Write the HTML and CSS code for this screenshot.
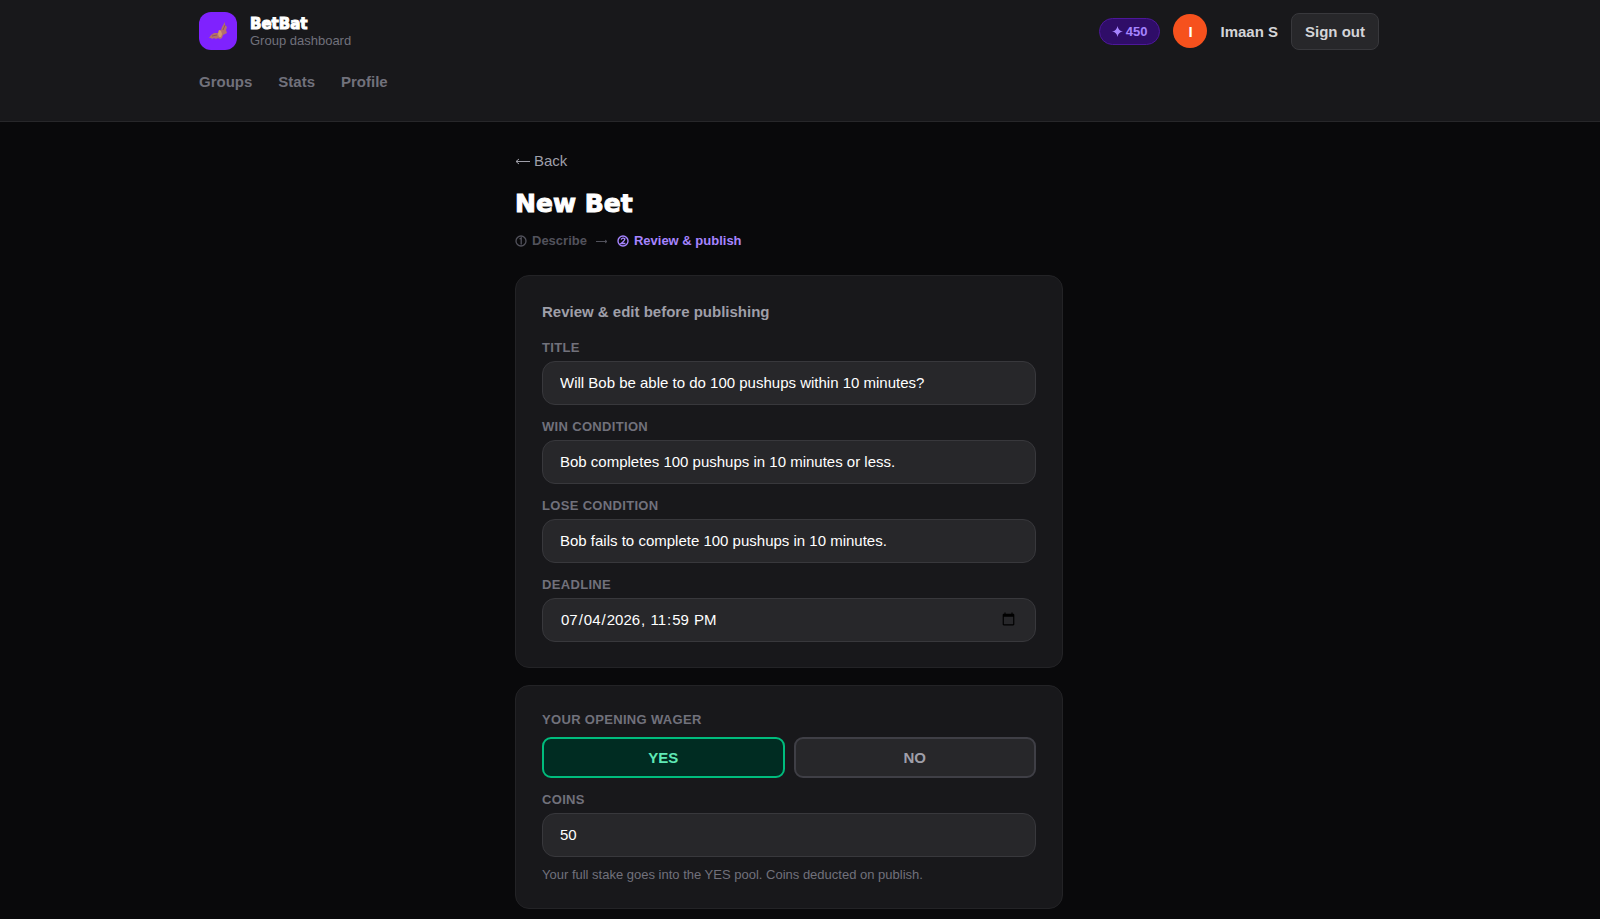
FILE: index.html
```html
<!DOCTYPE html>
<html lang="en">
<head>
    <meta charset="UTF-8">
    <meta name="viewport" content="width=device-width, initial-scale=1.0">
    <title>BetBat - New Bet</title>
    <link rel="stylesheet" href="styles.css">
</head>
<body>
    <header class="header">
        <div class="header-inner">
            <div class="topbar">
                <a class="brand" href="#">
                    <span class="logo">
                        <svg width="20" height="20" viewBox="0 0 20 20">
                            <path d="M1 17 L3 14 L6 12 L10 12 L11 9 L13 9 L14 6 L17 1 L17 4 L19 6 L18 9 L19 12 L17 13 L15 14 L14 17 L12 18 L10 17 L8 18 L6 17 L4 18 L3 17 Z" fill="#b5706a"/>
                            <path d="M11 9 L13 10 L14 13 L13 16 L11 16 L10 13 Z" fill="#d39a6c"/>
                            <path d="M17 4 L15 9 M4 15 L9 14" stroke="#8f5560" stroke-width="1" fill="none"/>
                        </svg>
                    </span>
                    <span class="brand-text">
                        <span class="brand-name">BetBat</span>
                        <span class="brand-sub">Group dashboard</span>
                    </span>
                </a>
                <div class="account">
                    <span class="coins-badge">
                        <svg width="11" height="11" viewBox="0 0 12 12"><path d="M6 0 Q6.8 5.2 12 6 Q6.8 6.8 6 12 Q5.2 6.8 0 6 Q5.2 5.2 6 0Z" fill="currentColor"/></svg>
                        450
                    </span>
                    <span class="avatar">I</span>
                    <span class="user-name">Imaan S</span>
                    <button class="sign-out" type="button">Sign out</button>
                </div>
            </div>
            <nav class="nav">
                <a href="#">Groups</a>
                <a href="#">Stats</a>
                <a href="#">Profile</a>
            </nav>
        </div>
    </header>

    <main class="main">
        <a class="back" href="#">
            <svg width="15" height="8" viewBox="0 0 15 8"><path d="M15 4.5H1M4 2L1 4.5L4 7" fill="none" stroke="currentColor"/></svg>
            Back
        </a>
        <h1>New Bet</h1>
        <div class="steps">
            <span class="step">
                <svg width="12" height="12" viewBox="0 0 12 12" fill="none" stroke="currentColor" stroke-width="1.3"><circle cx="6" cy="6" r="5"/><path d="M4.5 4L6.2 3V9.5"/></svg>
                Describe
            </span>
            <svg class="step-arrow" width="12" height="6" viewBox="0 0 12 6"><path d="M0 3.5H11M9 2L11 3.5L9 5" fill="none" stroke="currentColor"/></svg>
            <span class="step active">
                <svg width="12" height="12" viewBox="0 0 12 12" fill="none" stroke="currentColor" stroke-width="1.4"><circle cx="6" cy="6" r="5"/><path d="M4 4.5Q6 2.2 7.8 3.8Q8 5.2 4 8.5H8.4"/></svg>
                Review &amp; publish
            </span>
        </div>

        <form>
            <section class="card">
                <h2>Review &amp; edit before publishing</h2>
                <div class="field">
                    <label for="title">Title</label>
                    <input id="title" type="text" value="Will Bob be able to do 100 pushups within 10 minutes?">
                </div>
                <div class="field">
                    <label for="win">Win condition</label>
                    <input id="win" type="text" value="Bob completes 100 pushups in 10 minutes or less.">
                </div>
                <div class="field">
                    <label for="lose">Lose condition</label>
                    <input id="lose" type="text" value="Bob fails to complete 100 pushups in 10 minutes.">
                </div>
                <div class="field">
                    <label for="deadline">Deadline</label>
                    <input id="deadline" type="datetime-local" value="2026-07-04T23:59">
                </div>
            </section>

            <section class="card">
                <div class="field">
                    <span class="label" id="wager-label">Your opening wager</span>
                    <div class="sides" role="group" aria-labelledby="wager-label">
                        <button class="side yes" type="button">YES</button>
                        <button class="side" type="button">NO</button>
                    </div>
                </div>
                <div class="field">
                    <label for="coins">Coins</label>
                    <input id="coins" type="text" inputmode="numeric" value="50">
                    <p class="hint">Your full stake goes into the YES pool. Coins deducted on publish.</p>
                </div>
            </section>
        </form>
    </main>
</body>
</html>
```
FILE: styles.css
```css
* {
    box-sizing: border-box;
}
body {
    margin: 0;
    padding-right: 22px;
    background: #09090b;
    color: #fff;
    font-family: "Liberation Sans", Arial, sans-serif;
    font-size: 15px;
    line-height: 21px;
}
a {
    color: inherit;
    text-decoration: none;
}
h1, h2, p {
    margin: 0;
}
button, input {
    font: inherit;
    color: inherit;
}

/* header */
.header {
    margin-right: -22px;
    padding-right: 22px;
    background: #18181b;
    border-bottom: 1px solid #27272a;
}
.header-inner {
    max-width: 1180px;
    margin: 0 auto;
    padding: 12px 0 29px;
}
.topbar {
    display: flex;
    justify-content: space-between;
    align-items: center;
}
.brand {
    display: flex;
    align-items: center;
    gap: 13px;
}
.logo {
    display: flex;
    align-items: center;
    justify-content: center;
    width: 38px;
    height: 38px;
    border-radius: 12px;
    background: #7f22fe;
}
.brand-text {
    display: flex;
    flex-direction: column;
    padding-top: 2px;
}
.brand-name {
    font-family: "Arial Black", "DejaVu Sans", sans-serif;
    font-size: 15px;
    font-weight: 900;
    line-height: 17px;
    -webkit-text-stroke: 1px #fff;
}
.brand-sub {
    font-size: 13px;
    line-height: 16px;
    color: #71717b;
}
.account {
    display: flex;
    align-items: center;
    gap: 13px;
    font-weight: 700;
}
.coins-badge {
    display: flex;
    align-items: center;
    gap: 3px;
    padding: 2px 12px;
    border: 1px solid #4d179a;
    border-radius: 16px;
    background: #2f0d68;
    color: #a684ff;
    font-size: 13px;
}
.avatar {
    display: flex;
    align-items: center;
    justify-content: center;
    width: 34px;
    height: 34px;
    border-radius: 50%;
    background: #f6511d;
}
.user-name {
    color: #d4d4d8;
}
.sign-out {
    padding: 7px 13px;
    border: 1px solid #38383c;
    border-radius: 8px;
    background: #27272a;
    color: #d4d4d8;
    font-weight: 700;
    cursor: pointer;
}
.nav {
    display: flex;
    gap: 26px;
    margin-top: 21px;
    color: #71717b;
    font-weight: 700;
}

/* page */
.main {
    max-width: 548px;
    margin: 0 auto;
    padding: 28px 0 24px;
}
.back {
    display: flex;
    align-items: center;
    gap: 4px;
    color: #9f9fa9;
}
h1 {
    margin-top: 16px;
    font-family: "Arial Black", "DejaVu Sans", sans-serif;
    font-size: 25px;
    font-weight: 900;
    line-height: 34px;
    -webkit-text-stroke: 1px #fff;
}
.steps {
    display: flex;
    align-items: center;
    gap: 9px;
    margin-top: 11px;
    font-size: 13px;
    font-weight: 700;
    line-height: 17px;
    color: #52525c;
}
.step {
    display: flex;
    align-items: center;
    gap: 5px;
}
.step.active {
    color: #a684ff;
}
.card {
    margin-top: 17px;
    padding: 25px 26px;
    border: 1px solid #232326;
    border-radius: 14px;
    background: #18181b;
}
.steps + form .card:first-child {
    margin-top: 26px;
}
h2 {
    margin-bottom: 17px;
    font-size: 15px;
    font-weight: 700;
    line-height: 21px;
    color: #9f9fa9;
}
.field + .field {
    margin-top: 13px;
}
label, .label {
    display: block;
    margin-bottom: 5px;
    font-size: 13px;
    font-weight: 700;
    line-height: 17px;
    letter-spacing: 0.025em;
    text-transform: uppercase;
    color: #71717b;
}
input {
    display: block;
    width: 100%;
    height: 44px;
    padding: 0 17px 2px;
    border: 1px solid #38383c;
    border-radius: 13px;
    background: #27272a;
}
.sides {
    display: grid;
    grid-template-columns: 1fr 1fr;
    gap: 9px;
    margin-top: 9px;
}
.side {
    padding: 8px;
    border: 2px solid #3f3f46;
    border-radius: 9px;
    background: #27272a;
    color: #9f9fa9;
    font-weight: 700;
    cursor: pointer;
}
.side.yes {
    border-color: #00bc7d;
    background: #002c22;
    color: #5ee9b5;
}
.hint {
    margin-top: 9px;
    font-size: 13px;
    line-height: 17px;
    color: #71717b;
}
```
